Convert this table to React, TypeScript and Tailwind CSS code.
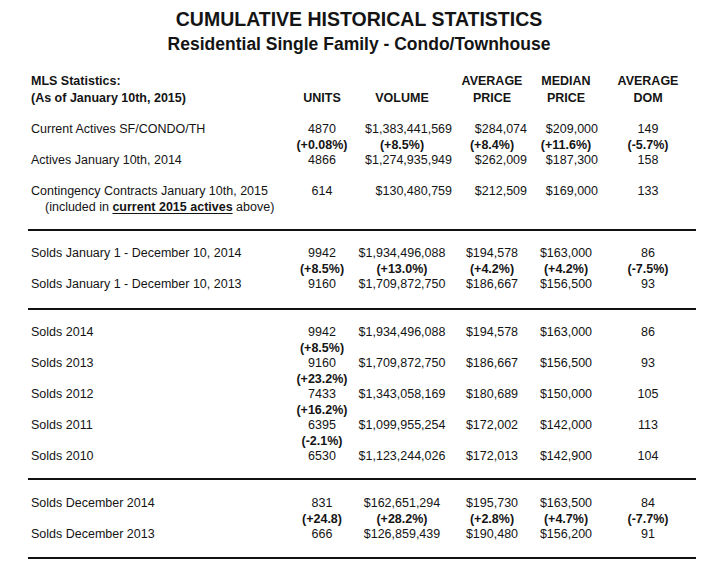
import React from 'react';

type Line = {
  label?: React.ReactNode;
  cells?: string[];
  bold?: boolean;
  right?: boolean; // first block keeps its figures flush right
};

const cols = 'grid grid-cols-[264px_60px_100px_80px_68px_96px]';

// alignment per column when the figures are flush right (block 1 only)
const rightPad = ['', 'text-right', 'text-right pr-[5px]', 'text-right pr-[2px]', ''];

const DataLine = ({ line }: { line: Line }) => (
  <div className={`${cols} h-[15.5px] leading-[15.5px] text-[12.5px] ${line.bold ? 'font-bold' : ''}`}>
    <div className="pl-[3px] whitespace-nowrap">{line.label}</div>
    {(line.cells || ['', '', '', '', '']).map((c, i) => (
      <div key={i} className={`whitespace-nowrap ${line.right && rightPad[i] ? rightPad[i] : 'text-center'}`}>
        {c}
      </div>
    ))}
  </div>
);

const Rule = ({ className }: { className: string }) => <div className={`h-[2px] bg-[#111] ${className}`} />;

const actives: Line[] = [
  { label: 'Current Actives SF/CONDO/TH', cells: ['4870', '$1,383,441,569', '$284,074', '$209,000', '149'], right: true },
  { bold: true, cells: ['(+0.08%)', '(+8.5%)', '(+8.4%)', '(+11.6%)', '(-5.7%)'] },
  { label: 'Actives January 10th, 2014', cells: ['4866', '$1,274,935,949', '$262,009', '$187,300', '158'], right: true },
  {},
  { label: 'Contingency Contracts January 10th, 2015', cells: ['614', '$130,480,759', '$212,509', '$169,000', '133'], right: true },
  {
    label: (
      <span className="pl-[14px]">
        (included in <span className="font-bold underline underline-offset-[1.5px]">current 2015 actives</span> above)
      </span>
    ),
  },
];

const soldsYtd: Line[] = [
  { label: 'Solds January 1 - December 10, 2014', cells: ['9942', '$1,934,496,088', '$194,578', '$163,000', '86'] },
  { bold: true, cells: ['(+8.5%)', '(+13.0%)', '(+4.2%)', '(+4.2%)', '(-7.5%)'] },
  { label: 'Solds January 1 - December 10, 2013', cells: ['9160', '$1,709,872,750', '$186,667', '$156,500', '93'] },
];

const soldsYears: Line[] = [
  { label: 'Solds 2014', cells: ['9942', '$1,934,496,088', '$194,578', '$163,000', '86'] },
  { bold: true, cells: ['(+8.5%)', '', '', '', ''] },
  { label: 'Solds 2013', cells: ['9160', '$1,709,872,750', '$186,667', '$156,500', '93'] },
  { bold: true, cells: ['(+23.2%)', '', '', '', ''] },
  { label: 'Solds 2012', cells: ['7433', '$1,343,058,169', '$180,689', '$150,000', '105'] },
  { bold: true, cells: ['(+16.2%)', '', '', '', ''] },
  { label: 'Solds 2011', cells: ['6395', '$1,099,955,254', '$172,002', '$142,000', '113'] },
  { bold: true, cells: ['(-2.1%)', '', '', '', ''] },
  { label: 'Solds 2010', cells: ['6530', '$1,123,244,026', '$172,013', '$142,900', '104'] },
];

const soldsDec: Line[] = [
  { label: 'Solds December 2014', cells: ['831', '$162,651,294', '$195,730', '$163,500', '84'] },
  { bold: true, cells: ['(+24.8)', '(+28.2%)', '(+2.8%)', '(+4.7%)', '(-7.7%)'] },
  { label: 'Solds December 2013', cells: ['666', '$126,859,439', '$190,480', '$156,200', '91'] },
];

const Block = ({ lines, className }: { lines: Line[]; className: string }) => (
  <div className={className}>
    {lines.map((l, i) => (
      <DataLine key={i} line={l} />
    ))}
  </div>
);

export default function App() {
  return (
    <div className="w-[718px] h-[575px] bg-white text-[#141414] font-['Liberation_Sans',Arial,sans-serif] pt-[7px] overflow-hidden">
      <h1 className="text-center font-bold text-[19.5px] leading-[24px]">CUMULATIVE HISTORICAL STATISTICS</h1>
      <h2 className="text-center font-bold text-[17.5px] leading-[22px] mt-[1.5px]">Residential Single Family - Condo/Townhouse</h2>

      <div className="ml-[28px] w-[668px]">
        {/* column headings */}
        <div className={`${cols} mt-[18.5px] text-[12.5px] leading-[17px] font-bold`}>
          <div className="pl-[3px]">
            <div>MLS Statistics:</div>
            <div>(As of January 10th, 2015)</div>
          </div>
          <div className="text-center self-end">UNITS</div>
          <div className="text-center self-end">VOLUME</div>
          <div className="text-center">AVERAGE<br />PRICE</div>
          <div className="text-center">MEDIAN<br />PRICE</div>
          <div className="text-center">AVERAGE<br />DOM</div>
        </div>

        <Block lines={actives} className="mt-[15px]" />
        <Rule className="mt-[14px]" />
        <Block lines={soldsYtd} className="mt-[15px]" />
        <Rule className="mt-[15px]" />
        <Block lines={soldsYears} className="mt-[15.5px]" />
        <Rule className="mt-[13.5px]" />
        <Block lines={soldsDec} className="mt-[16px]" />
        <Rule className="mt-[14.5px]" />
      </div>
    </div>
  );
}
